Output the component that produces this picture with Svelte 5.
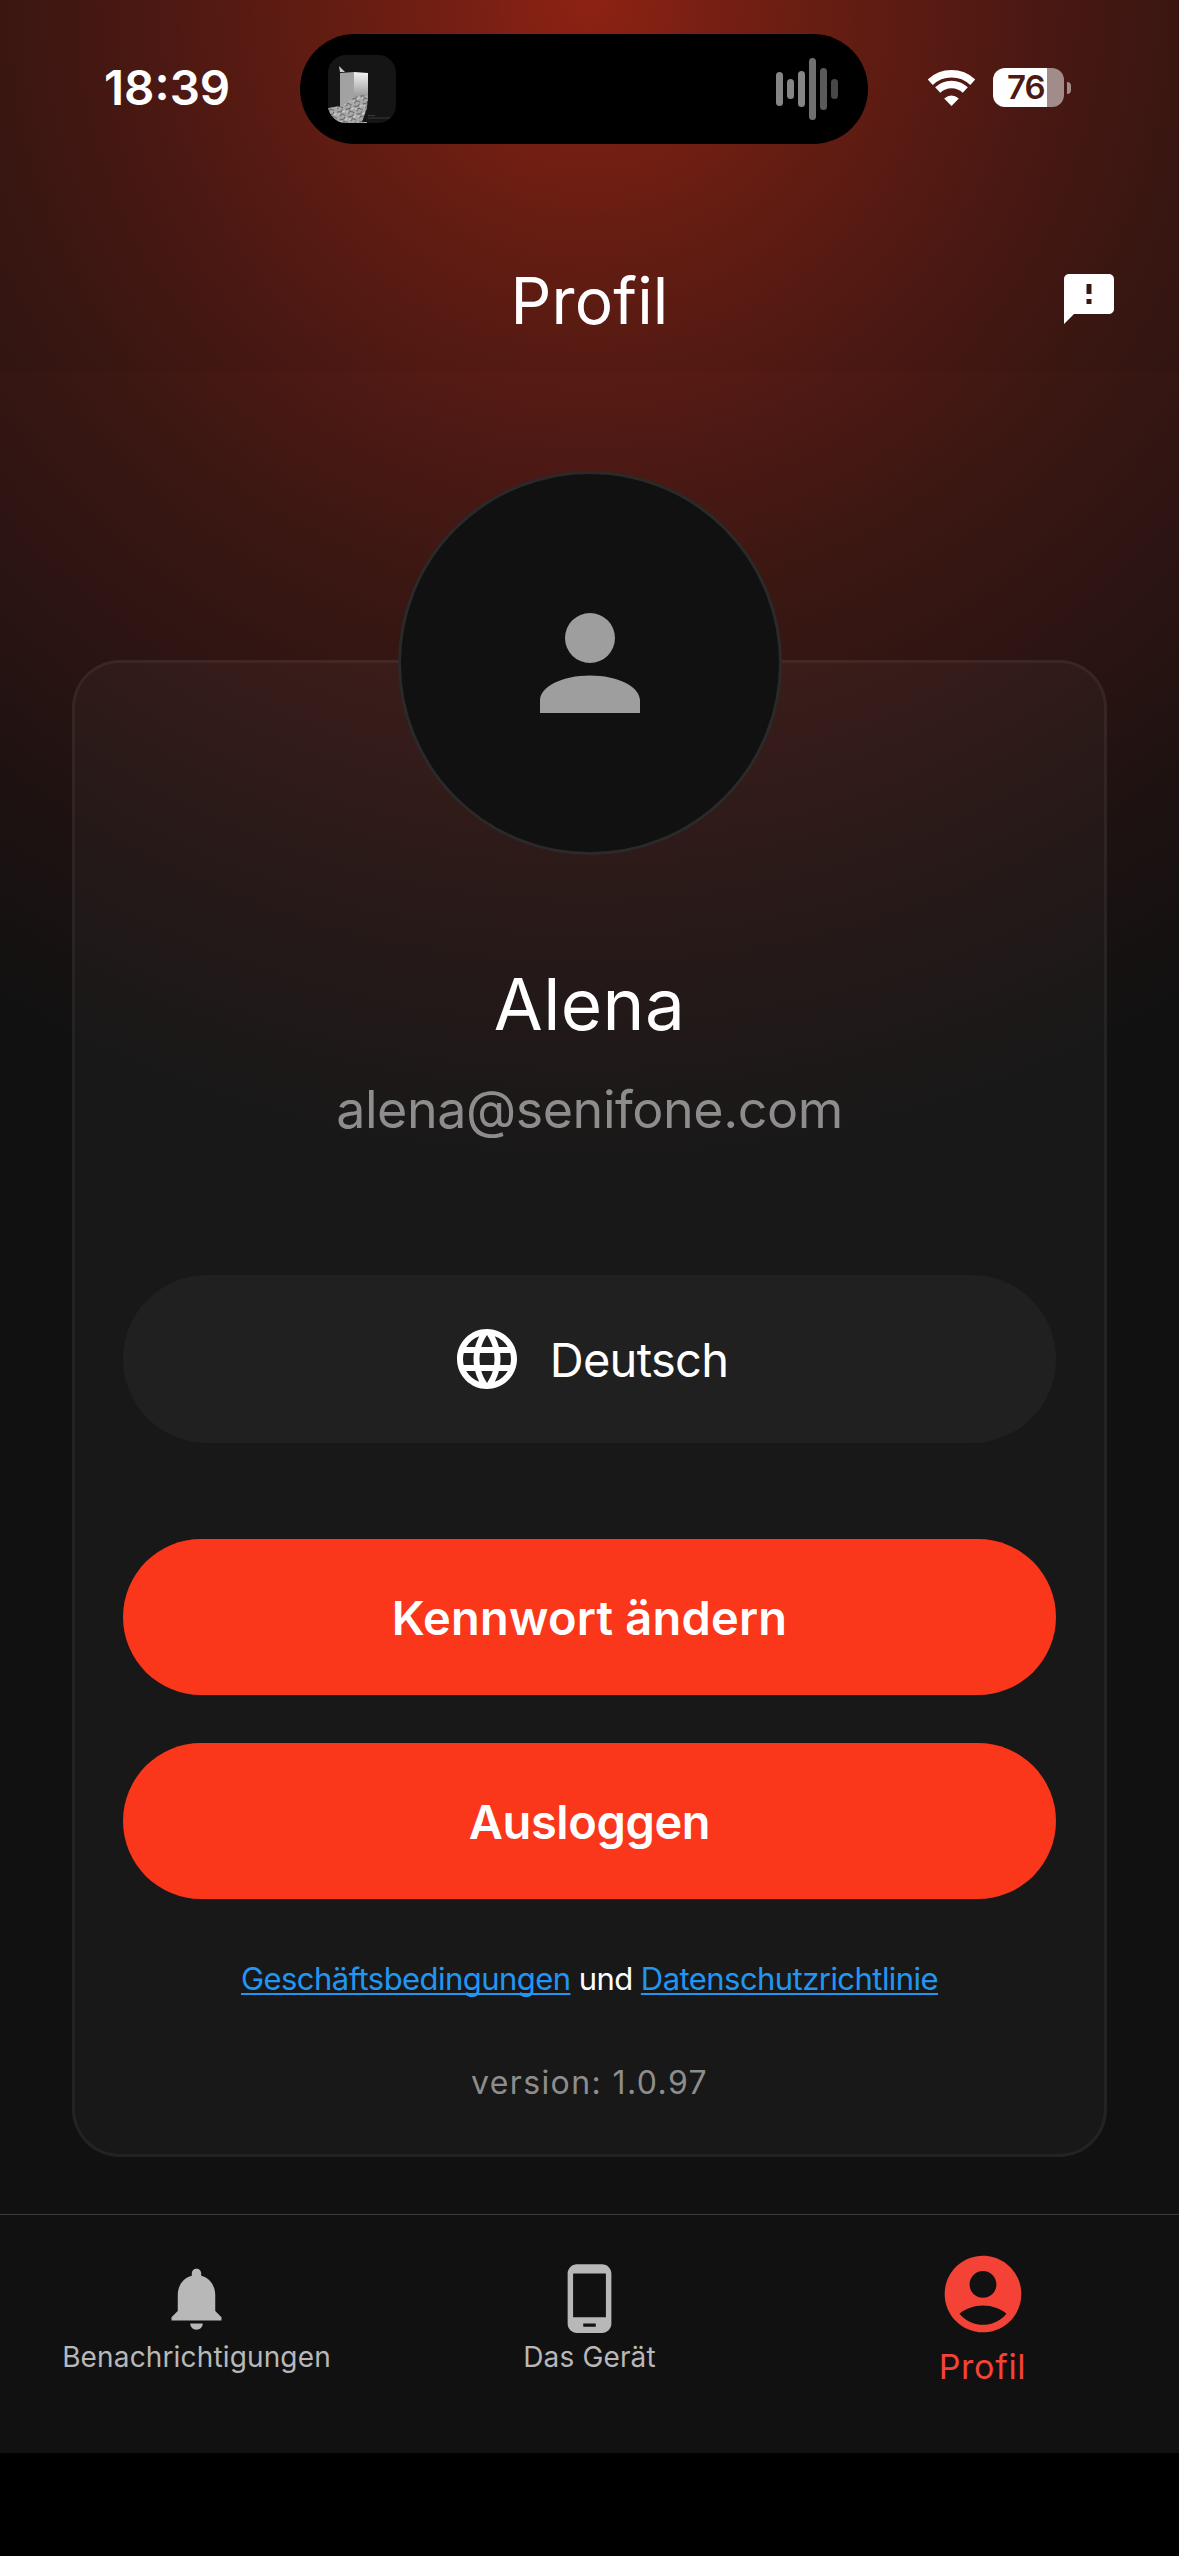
<script>
  const time = '18:39';
  const battery = 76;

  const user = {
    name: 'Alena',
    email: 'alena@senifone.com',
    language: 'Deutsch'
  };

  const version = '1.0.97';
  const wave = [34, 20, 36, 62, 42, 20];

  const tabs = [
    {
      id: 'notifications',
      label: 'Benachrichtigungen',
      icon: 'M12 22c1.1 0 2-.9 2-2h-4c0 1.1.89 2 2 2zm6-6v-5c0-3.07-1.64-5.64-4.5-6.32V4c0-.83-.67-1.5-1.5-1.5s-1.5.67-1.5 1.5v.68C7.63 5.36 6 7.92 6 11v5l-2 2v1h16v-1l-2-2z'
    },
    {
      id: 'device',
      label: 'Das Gerät',
      icon: 'M16 1H8C6.34 1 5 2.34 5 4v16c0 1.66 1.34 3 3 3h8c1.66 0 3-1.34 3-3V4c0-1.66-1.34-3-3-3zm-2 20h-4v-1h4v1zm3.25-3H6.75V4h10.5v14z'
    },
    {
      id: 'profile',
      label: 'Profil',
      icon: 'M12 2C6.48 2 2 6.48 2 12s4.48 10 10 10 10-4.48 10-10S17.52 2 12 2zm0 4c1.93 0 3.5 1.57 3.5 3.5S13.93 13 12 13s-3.5-1.57-3.5-3.5S10.07 6 12 6zm0 14c-2.03 0-4.43-.82-6.14-2.88C7.55 15.8 9.68 15 12 15s4.45.8 6.14 2.12C16.43 19.18 14.03 20 12 20z'
    }
  ];

  let active = $state('profile');
</script>

<div class="screen">
  <header>
    <div class="status">
      <span class="time">{time}</span>

      <div class="island">
        <svg class="cover" viewBox="0 0 68 68">
          <defs>
            <linearGradient id="side" x1="0" y1="0" x2="0" y2="1">
              <stop offset="0" stop-color="#f4f4f4" />
              <stop offset="1" stop-color="#8a8a8a" />
            </linearGradient>
            <pattern id="rubble" width="9" height="8" patternUnits="userSpaceOnUse" patternTransform="rotate(-18)">
              <rect width="9" height="8" fill="#a8a8a8" />
              <path d="M0 1l4 1 2-2M1 6l3-2 3 3" stroke="#565656" fill="none" />
              <path d="M5 3l3-1M0 4h2" stroke="#dedede" />
            </pattern>
          </defs>
          <rect width="68" height="68" fill="#151515" />
          <path d="M11 11l6 6h-5z" fill="#ccc" />
          <path d="M12 18l14-1v34l-14 2z" fill="#a2a2a2" />
          <path d="M26 17l14 1v28H26z" fill="url(#side)" />
          <path d="M0 53l12-2 8-3 6-6 7-2 7 1-1 12-5 14h5v1H0z" fill="url(#rubble)" />
          <path d="M40 60.500h7M40 63h25" stroke="#3a3a3a" />
        </svg>
        <div class="wave">
          {#each wave as height}
            <i style="height: {height}px"></i>
          {/each}
        </div>
      </div>

      <svg class="wifi" viewBox="0 0 47 36">
        <path d="M2.2 12.2a31 31 0 0 1 42.6 0" />
        <path d="M9.7 20a20 20 0 0 1 27.6 0" />
        <path class="dot" d="M23.5 36l-7.3-7.600q7.300-6 14.600 0z" />
      </svg>

      <div class="battery">
        <div class="cell" style="--level: {battery}%">{battery}</div>
        <div class="nub"></div>
      </div>
    </div>

    <div class="title">
      <h1>Profil</h1>
      <button class="feedback" aria-label="Feedback">
        <svg viewBox="0 0 24 24">
          <path d="M20 2H4c-1.1 0-1.99.9-1.99 2L2 22l4-4h14c1.1 0 2-.9 2-2V4c0-1.1-.9-2-2-2zm-7 12h-2v-2h2v2zm0-4h-2V6h2v4z" />
        </svg>
      </button>
    </div>
  </header>

  <main>
    <section class="card">
      <div class="avatar">
        <svg viewBox="0 0 24 24">
          <path d="M12 4a4 4 0 0 1 4 4 4 4 0 0 1-4 4 4 4 0 0 1-4-4 4 4 0 0 1 4-4m0 10c4.42 0 8 1.79 8 4v2H4v-2c0-2.21 3.58-4 8-4z" />
        </svg>
      </div>

      <h2>{user.name}</h2>
      <p class="email">{user.email}</p>

      <button class="language">
        <svg viewBox="0 0 24 24">
          <path d="M11.99 2C6.47 2 2 6.48 2 12s4.47 10 9.99 10C17.52 22 22 17.52 22 12S17.52 2 11.99 2zm6.93 6h-2.95c-.32-1.25-.78-2.45-1.38-3.56 1.84.63 3.37 1.91 4.33 3.56zM12 4.04c.83 1.2 1.48 2.53 1.91 3.96h-3.82c.43-1.43 1.08-2.76 1.91-3.96zM4.26 14C4.1 13.36 4 12.69 4 12s.1-1.36.26-2h3.38c-.08.66-.14 1.32-.14 2s.06 1.34.14 2H4.26zm.82 2h2.95c.32 1.25.78 2.45 1.38 3.56-1.84-.63-3.37-1.9-4.33-3.56zm2.95-8H5.08c.96-1.66 2.49-2.93 4.33-3.56C8.81 5.55 8.35 6.75 8.03 8zM12 19.96c-.83-1.2-1.48-2.53-1.91-3.96h3.82c-.43 1.43-1.08 2.76-1.91 3.96zM14.34 14H9.66c-.09-.66-.16-1.32-.16-2s.07-1.35.16-2h4.68c.09.65.16 1.32.16 2s-.07 1.34-.16 2zm.25 5.56c.6-1.11 1.06-2.31 1.38-3.56h2.95c-.96 1.65-2.49 2.93-4.33 3.56zM16.36 14c.08-.66.14-1.32.14-2s-.06-1.34-.14-2h3.38c.16.64.26 1.31.26 2s-.1 1.36-.26 2h-3.38z" />
        </svg>
        <span>{user.language}</span>
      </button>

      <div class="actions">
        <button>Kennwort ändern</button>
        <button class="logout">Ausloggen</button>
      </div>

      <p class="legal">
        <a href="#terms">Geschäftsbedingungen</a> und <a href="#privacy">Datenschutzrichtlinie</a>
      </p>
      <p class="version">version: {version}</p>
    </section>
  </main>

  <nav>
    {#each tabs as tab}
      <button class:active={active === tab.id} onclick={() => (active = tab.id)}>
        <svg viewBox="0 0 24 24"><path d={tab.icon} /></svg>
        <span>{tab.label}</span>
      </button>
    {/each}
  </nav>
  <div class="safe-area"></div>
</div>

<style>
  :global(body) {
    margin: 0;
    background: #000;
  }

  .screen {
    width: 1179px;
    height: 2556px;
    overflow: hidden;
    display: flex;
    flex-direction: column;
    background: radial-gradient(circle at 50% 0, #962415 0, #7d2014 130px, #641d13 290px, #4e1914 450px, #3b1712 610px, #2b1412 810px, #1d1211 980px, #111 1179px);
    font-family: Inter, 'Liberation Sans', sans-serif;
    color: #fff;
  }

  h1, h2, p {
    margin: 0;
    font-weight: 400;
  }

  button {
    padding: 0;
    border: none;
    background: none;
    color: inherit;
    font: inherit;
    cursor: pointer;
  }

  svg {
    display: block;
    fill: currentColor;
  }

  header {
    height: 372px;
    box-sizing: border-box;
    padding-top: 34px;
    background: rgba(17, 17, 17, 0.06);
  }

  .status {
    display: flex;
    align-items: center;
    height: 110px;
    padding-left: 104px;
  }

  .time {
    width: 196px;
    font-size: 47.5px;
    font-weight: 600;
    line-height: 50px;
    padding-bottom: 2px;
  }

  .island {
    width: 568px;
    height: 110px;
    box-sizing: border-box;
    padding: 0 30px 0 28px;
    border-radius: 55px;
    background: #000;
    display: flex;
    align-items: center;
    justify-content: space-between;
  }

  .cover {
    width: 68px;
    height: 68px;
    border-radius: 18px;
  }

  .wave {
    display: flex;
    align-items: center;
    gap: 4px;
  }

  .wave i {
    width: 7px;
    border-radius: 4px;
    background: #858585;
  }

  .wave i:nth-child(4) {
    background: #707070;
  }

  .wave i:nth-child(5) {
    background: #5a5a5a;
  }

  .wave i:nth-child(6) {
    background: #484848;
  }

  .wifi {
    width: 47px;
    height: 36px;
    margin-left: 60px;
    margin-bottom: 3px;
    fill: none;
    stroke: #fff;
    stroke-width: 7.4;
    overflow: hidden;
  }

  .wifi .dot {
    fill: #fff;
    stroke: none;
  }

  .battery {
    display: flex;
    align-items: center;
    gap: 3px;
    margin-left: 18px;
    margin-bottom: 3px;
  }

  .cell {
    width: 71px;
    height: 39px;
    padding-left: 14px;
    box-sizing: border-box;
    border-radius: 12px;
    background: linear-gradient(90deg, #fff var(--level), #a18c89 var(--level));
    color: #4a1a14;
    font-size: 33px;
    font-weight: 600;
    line-height: 39px;
    letter-spacing: -1px;
  }

  .nub {
    width: 4px;
    height: 12px;
    border-radius: 0 4px 4px 0;
    background: #a18c89;
  }

  .title {
    display: grid;
    grid-template-columns: 1fr auto 1fr;
    align-items: center;
    height: 120px;
    margin-top: 96px;
    padding: 0 60px;
  }

  h1 {
    grid-column: 2;
    padding-top: 2px;
    font-size: 64px;
    line-height: 80px;
    letter-spacing: 0.2px;
  }

  .feedback {
    justify-self: end;
  }

  .feedback svg {
    width: 60px;
    height: 60px;
    margin-bottom: 2px;
  }

  main {
    padding: 288px 72px 57px;
  }

  .card {
    height: 1497px;
    box-sizing: border-box;
    padding: 0 48px;
    border: 3px solid rgba(255, 255, 255, 0.05);
    border-radius: 48px;
    background: rgba(255, 255, 255, 0.03);
    display: flex;
    flex-direction: column;
    text-align: center;
  }

  .avatar {
    width: 384px;
    height: 384px;
    box-sizing: border-box;
    flex: none;
    align-self: center;
    margin-top: -192px;
    border: 3px solid #2a2a2a;
    border-radius: 50%;
    background: #111;
    color: #9e9e9e;
    display: flex;
    align-items: center;
    justify-content: center;
  }

  .avatar svg {
    width: 150px;
    height: 150px;
  }

  h2 {
    margin-top: 99px;
    font-size: 71px;
    line-height: 100px;
    letter-spacing: 0.4px;
  }

  .email {
    margin-top: 16px;
    font-size: 52px;
    line-height: 80px;
    letter-spacing: -0.45px;
    color: #8d8d8d;
  }

  .language {
    height: 168px;
    margin-top: 125px;
    border-radius: 84px;
    background: #202020;
    display: flex;
    align-items: center;
    justify-content: center;
    gap: 27px;
    font-size: 47px;
    letter-spacing: -0.7px;
  }

  .language svg {
    width: 72px;
    height: 72px;
  }

  .actions {
    display: flex;
    flex-direction: column;
    gap: 48px;
    margin-top: 96px;
  }

  .actions button {
    height: 156px;
    border-radius: 78px;
    background: #fa361b;
    font-size: 47px;
    font-weight: 600;
    letter-spacing: 0.2px;
  }

  .actions .logout {
    letter-spacing: -0.4px;
  }

  .legal {
    margin-top: 55px;
    font-size: 31px;
    line-height: 50px;
    letter-spacing: -0.55px;
  }

  .legal a {
    color: #2196f3;
    text-decoration-thickness: 2px;
    text-underline-offset: 3px;
    text-decoration-skip-ink: none;
  }

  .version {
    margin-top: 54px;
    font-size: 32px;
    line-height: 50px;
    letter-spacing: 1.4px;
    color: #8d8d8d;
  }

  nav {
    height: 239px;
    box-sizing: border-box;
    border-top: 1px solid #3a3a3a;
    background: #111;
    display: grid;
    grid-template-columns: repeat(3, 1fr);
  }

  nav button {
    display: flex;
    flex-direction: column;
    align-items: center;
    padding-top: 46px;
    color: #b8b8b8;
    font-size: 28px;
    line-height: 34px;
    letter-spacing: 0.15px;
  }

  nav svg {
    width: 75px;
    height: 75px;
    margin-bottom: 4px;
  }

  nav .active {
    padding-top: 33px;
    color: #f44336;
    font-size: 34px;
    line-height: 44px;
    letter-spacing: 0.7px;
  }

  nav .active svg {
    width: 92px;
    height: 92px;
    margin-bottom: 5px;
  }

  .safe-area {
    flex: 1;
    background: #000;
  }
</style>
